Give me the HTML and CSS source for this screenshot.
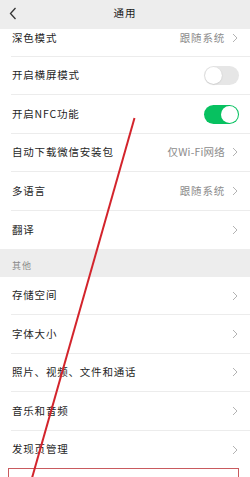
FILE: index.html
```html
<!DOCTYPE html>
<html lang="zh-CN">
<head>
<meta charset="utf-8">
<title>通用</title>
<link rel="stylesheet" href="styles.css">
</head>
<body>
<div class="page">
  <header class="nav">
    <svg class="back" width="8" height="13" viewBox="0 0 8 13"><polyline points="6.5,1 1.5,6.5 6.5,12" fill="none" stroke="#333" stroke-width="1.3"/></svg>
    <div class="title">通用</div>
  </header>

  <div class="group">
    <div class="row clipped">
      <span class="label">深色模式</span>
      <span class="value">跟随系统</span>
      <svg class="chev" width="6" height="10" viewBox="0 0 6 10"><polyline points="1,1 5,5 1,9" fill="none" stroke="#b3b3b3" stroke-width="1"/></svg>
    </div>
    <div class="row">
      <span class="label">开启横屏模式</span>
      <span class="switch"><span class="knob"></span></span>
    </div>
    <div class="row">
      <span class="label">开启NFC功能</span>
      <span class="switch on"><span class="knob"></span></span>
    </div>
    <div class="row">
      <span class="label">自动下载微信安装包</span>
      <span class="value latin">仅Wi-Fi网络</span>
      <svg class="chev" width="6" height="10" viewBox="0 0 6 10"><polyline points="1,1 5,5 1,9" fill="none" stroke="#b3b3b3" stroke-width="1"/></svg>
    </div>
    <div class="row">
      <span class="label">多语言</span>
      <span class="value">跟随系统</span>
      <svg class="chev" width="6" height="10" viewBox="0 0 6 10"><polyline points="1,1 5,5 1,9" fill="none" stroke="#b3b3b3" stroke-width="1"/></svg>
    </div>
    <div class="row last">
      <span class="label">翻译</span>
      <svg class="chev" width="6" height="10" viewBox="0 0 6 10"><polyline points="1,1 5,5 1,9" fill="none" stroke="#b3b3b3" stroke-width="1"/></svg>
    </div>
  </div>

  <div class="section">其他</div>

  <div class="group">
    <div class="row">
      <span class="label">存储空间</span>
      <svg class="chev" width="6" height="10" viewBox="0 0 6 10"><polyline points="1,1 5,5 1,9" fill="none" stroke="#b3b3b3" stroke-width="1"/></svg>
    </div>
    <div class="row">
      <span class="label">字体大小</span>
      <svg class="chev" width="6" height="10" viewBox="0 0 6 10"><polyline points="1,1 5,5 1,9" fill="none" stroke="#b3b3b3" stroke-width="1"/></svg>
    </div>
    <div class="row">
      <span class="label">照片、视频、文件和通话</span>
      <svg class="chev" width="6" height="10" viewBox="0 0 6 10"><polyline points="1,1 5,5 1,9" fill="none" stroke="#b3b3b3" stroke-width="1"/></svg>
    </div>
    <div class="row">
      <span class="label">音乐和音频</span>
      <svg class="chev" width="6" height="10" viewBox="0 0 6 10"><polyline points="1,1 5,5 1,9" fill="none" stroke="#b3b3b3" stroke-width="1"/></svg>
    </div>
    <div class="row last">
      <span class="label">发现页管理</span>
      <svg class="chev" width="6" height="10" viewBox="0 0 6 10"><polyline points="1,1 5,5 1,9" fill="none" stroke="#b3b3b3" stroke-width="1"/></svg>
    </div>
  </div>

  <div class="annot-box"></div>
  <svg class="annot-line" width="250" height="477" viewBox="0 0 250 477">
    <line x1="134.5" y1="118" x2="32" y2="478" stroke="#d3242c" stroke-width="2"/>
  </svg>
</div>
</body>
</html>
```

FILE: styles.css
```css
html, body {
  margin: 0;
  padding: 0;
  background: #ffffff;
}

body {
  font-family: "Noto Sans CJK SC", "Noto Sans", sans-serif;
  color: #1f1f1f;
  overflow: hidden;
}

.page {
  position: relative;
  width: 250px;
  height: 477px;
  overflow: hidden;
  background: #ffffff;
}

.nav {
  height: 29px;
  background: #ededed;
  display: flex;
  align-items: center;
  justify-content: center;
  position: relative;
}

.back {
  position: absolute;
  left: 9px;
  top: 7px;
}

.title {
  font-size: 10.5px;
  letter-spacing: 1px;
  color: #1a1a1a;
  line-height: 1;
  margin-top: -2px;
}

.group {
  background: #ffffff;
}

.row {
  box-sizing: border-box;
  height: 38.4px;
  margin-left: 11px;
  padding-left: 1px;
  padding-right: 12px;
  border-bottom: 1px solid #ececec;
  display: flex;
  align-items: center;
}

.row.clipped {
  height: 28px;
  padding-bottom: 9px;
}

.row.last {
  border-bottom: none;
}

.label {
  flex: 1;
  font-size: 10.5px;
  letter-spacing: 0.8px;
  line-height: 1;
  color: #1f1f1f;
  white-space: nowrap;
}

.value {
  font-size: 10.5px;
  letter-spacing: 0.8px;
  line-height: 1;
  color: #8c8c8c;
  margin-right: 7px;
  white-space: nowrap;
}

.value.latin {
  letter-spacing: 0.2px;
}

.chev {
  display: block;
  flex: none;
}

.switch {
  box-sizing: border-box;
  width: 35px;
  height: 19px;
  border-radius: 10px;
  background: #e6e6e6;
  padding: 1px;
  display: flex;
  align-items: center;
  margin-right: -1px;
}

.switch .knob {
  width: 17px;
  height: 17px;
  border-radius: 50%;
  background: #ffffff;
  box-shadow: 0 0.5px 1.5px rgba(0, 0, 0, 0.18);
}

.switch.on {
  background: #07c160;
  justify-content: flex-end;
}

.switch.on .knob {
  box-shadow: none;
}

.section {
  box-sizing: border-box;
  height: 28px;
  background: #ededed;
  padding-left: 12px;
  padding-top: 12px;
  font-size: 9px;
  letter-spacing: 1px;
  line-height: 1;
  color: #8a8a8a;
}

.annot-box {
  position: absolute;
  left: 8px;
  top: 468px;
  width: 231px;
  height: 40px;
  box-sizing: border-box;
  border: 1px solid #c95a5e;
}

.annot-line {
  position: absolute;
  left: 0;
  top: 0;
  pointer-events: none;
}
```
